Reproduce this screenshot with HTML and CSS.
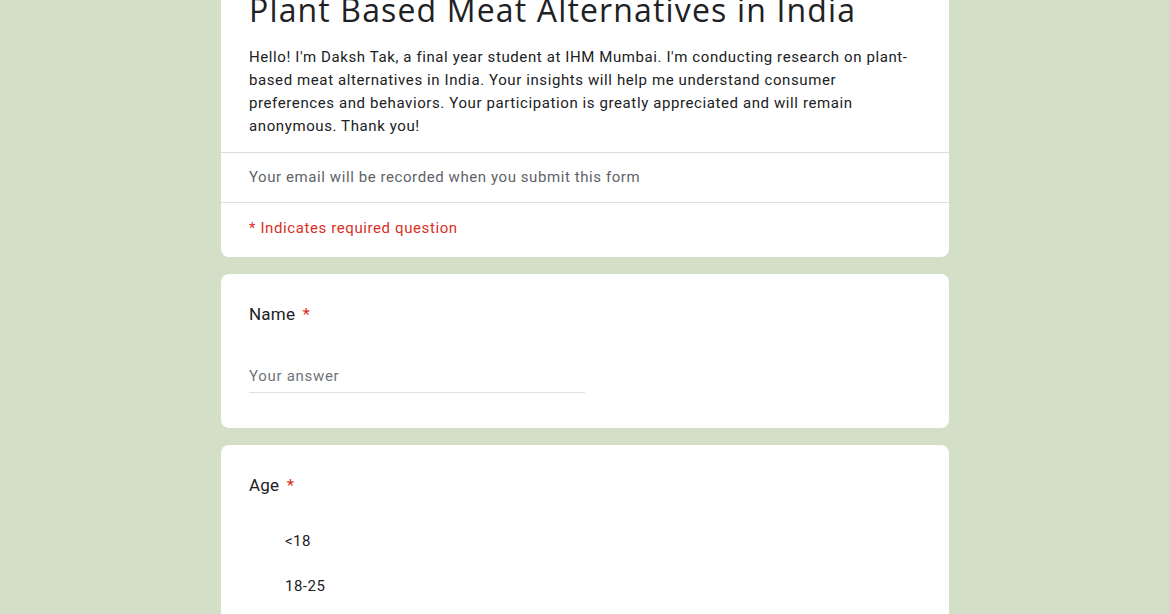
FILE: index.html
```html
<!DOCTYPE html>
<html>
<head>
<meta charset="utf-8">
<link rel="stylesheet" href="styles.css">
</head>
<body>
<main class="page">
  <section class="card header-card">
    <div class="header-main">
      <h1 class="title">Plant Based Meat Alternatives in India</h1>
      <p class="desc">Hello! I'm Daksh Tak, a final year student at IHM Mumbai. I'm conducting research on plant-based meat alternatives in India. Your insights will help me understand consumer preferences and behaviors. Your participation is greatly appreciated and will remain anonymous. Thank you!</p>
    </div>
    <div class="email-row">Your email will be recorded when you submit this form</div>
    <div class="required-row">* Indicates required question</div>
  </section>

  <section class="card question name-card">
    <div class="q-title">Name <span class="star">*</span></div>
    <div class="answer">Your answer</div>
  </section>

  <section class="card question age-card">
    <div class="q-title">Age <span class="star">*</span></div>
    <ul class="options">
      <li class="option">&lt;18</li>
      <li class="option">18-25</li>
    </ul>
  </section>
</main>
</body>
</html>
```

FILE: styles.css
```css
html, body {
  margin: 0;
  padding: 0;
  background: #d4dfc7;
  height: 100%;
  overflow: hidden;
}

body {
  font-family: Roboto, "Liberation Sans", sans-serif;
  color: #202124;
}

.page {
  width: 728px;
  margin: 0 auto;
  margin-top: -40px;
  display: flex;
  flex-direction: column;
  gap: 17px;
}

.card {
  background: #ffffff;
  border-radius: 8px;
}

.header-main {
  padding: 30px 28px 14px 28px;
}

.title {
  margin: 0;
  font-family: "Open Sans", Roboto, sans-serif;
  font-weight: 400;
  font-size: 32px;
  line-height: 40px;
  letter-spacing: 1.15px;
  color: #202124;
  white-space: nowrap;
}

.desc {
  margin: 16px 0 0 0;
  font-size: 15px;
  line-height: 23px;
  letter-spacing: 0.6px;
  color: #202124;
}

.email-row {
  border-top: 1px solid #dadce0;
  padding: 0 28px;
  height: 49px;
  line-height: 48px;
  font-size: 15px;
  letter-spacing: 0.58px;
  color: #5f6368;
}

.required-row {
  border-top: 1px solid #dadce0;
  padding: 0 28px;
  height: 54px;
  line-height: 50px;
  font-size: 15px;
  letter-spacing: 0.6px;
  color: #d93025;
}

.question {
  padding: 28px 28px 0 28px;
}

.name-card {
  height: 126px;
}

.q-title {
  font-size: 17px;
  line-height: 24px;
  letter-spacing: 0.2px;
  color: #202124;
}

.star {
  color: #d93025;
  margin-left: 3px;
}

.answer {
  margin-top: 38px;
  width: 336px;
  font-size: 15px;
  line-height: 24px;
  letter-spacing: 0.7px;
  color: #70757a;
  border-bottom: 1px solid #e0e0e0;
  padding-bottom: 4px;
}

.age-card {
  height: 300px;
}

.options {
  list-style: none;
  margin: 32px 0 0 0;
  padding: 0 0 0 36px;
  display: flex;
  flex-direction: column;
  gap: 21px;
}

.option {
  font-size: 15px;
  line-height: 24px;
  letter-spacing: 0.5px;
  color: #202124;
}
```
